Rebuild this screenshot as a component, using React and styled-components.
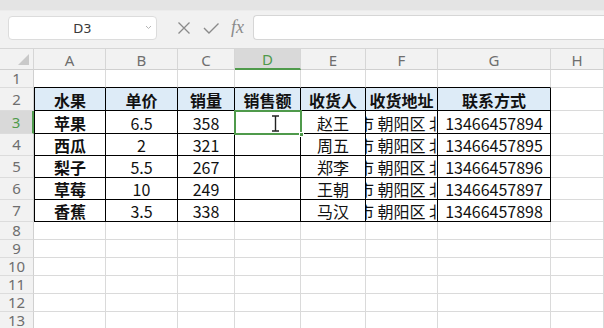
import React from "react";
import styled, { createGlobalStyle } from "styled-components";

const GlobalStyle = createGlobalStyle`
  html, body { margin: 0; padding: 0; background: #ffffff; }
  body { font-family: "Noto Sans", "Noto Sans CJK SC", sans-serif; }
  * { box-sizing: border-box; }
`;

const GREEN = "#4f9a4b";

const Page = styled.div`
  width: 604px;
  height: 328px;
  overflow: hidden;
  display: flex;
  flex-direction: column;
  background: #ffffff;
`;

const TopStrip = styled.div`
  height: 11px;
  flex: none;
  background: #e4e4e4;
  border-bottom: 1px solid #ececec;
`;

const FormulaBar = styled.div`
  height: 37px;
  flex: none;
  display: flex;
  align-items: flex-start;
  padding: 5px 0 0 8px;
  background: #f1f1f1;
`;

const NameBox = styled.div`
  width: 149px;
  height: 24px;
  background: #ffffff;
  border: 1px solid #dcdcdc;
  border-radius: 4px;
  display: flex;
  align-items: center;
  justify-content: center;
  position: relative;
  font-family: "DejaVu Sans", "Noto Sans", sans-serif;
  font-size: 13px;
  color: #3a3a3a;
`;

const Chevron = styled.span`
  position: absolute;
  right: 4px;
  top: 8px;
  display: flex;
`;

const IconGroup = styled.div`
  display: flex;
  align-items: center;
  height: 24px;
  gap: 12px;
  padding-left: 20px;
  width: 96px;
  flex: none;
`;

const Fx = styled.span`
  font-family: "Liberation Serif", serif;
  font-style: italic;
  font-size: 18px;
  color: #8a8a8a;
  line-height: 1;
  margin-top: -2px;
`;

const FormulaInput = styled.div`
  flex: 1;
  height: 25px;
  margin-top: -1px;
  background: #ffffff;
  border: 1px solid #d6d6d6;
  border-right: none;
  border-radius: 4px 0 0 4px;
`;

const Sheet = styled.div`
  display: grid;
  grid-template-columns: 34px 72px 72px 57px 66px 65px 72px 113px 1fr;
  grid-template-rows: ${(p) => p.$rows.map((r) => `${r}px`).join(" ")};
  flex: none;
`;

const Corner = styled.div`
  background: #f2f2f2;
  border-top: 1px solid #d6d6d6;
  border-right: 1px solid #d6d6d6;
  border-bottom: 1px solid #d0d0d0;
  display: flex;
  align-items: flex-end;
  justify-content: flex-end;
  padding: 0 4px 4px 0;
`;

const ColHeader = styled.div`
  background: ${(p) => (p.$selected ? "#d9d9d9" : "#f2f2f2")};
  border-top: 1px solid #d6d6d6;
  border-right: 1px solid #d6d6d6;
  border-bottom: ${(p) => (p.$selected ? `2px solid ${GREEN}` : "1px solid #d0d0d0")};
  display: flex;
  align-items: center;
  justify-content: center;
  font-size: 15px;
  color: ${(p) => (p.$selected ? GREEN : "#6e6e6e")};
  padding-top: 1px;
`;

const RowHeader = styled.div`
  background: ${(p) => (p.$selected ? "#d9d9d9" : "#f2f2f2")};
  border-right: ${(p) => (p.$selected ? `2px solid ${GREEN}` : "1px solid #d0d0d0")};
  border-bottom: 1px solid #dcdcdc;
  display: flex;
  align-items: center;
  justify-content: center;
  font-size: 15px;
  color: ${(p) => (p.$selected ? GREEN : "#6e6e6e")};
  line-height: 1;
`;

const Cell = styled.div`
  position: relative;
  background: ${(p) => (p.$fill ? "#ddebf7" : "#ffffff")};
  border-right: 1px solid ${(p) => (p.$table ? "#000000" : "#dadada")};
  border-bottom: 1px solid ${(p) => (p.$table || p.$tableTop ? "#000000" : "#dadada")};
  border-left: ${(p) => (p.$tableLeft ? "1px solid #000000" : "none")};
  display: flex;
  align-items: center;
  justify-content: center;
  overflow: hidden;
  white-space: nowrap;
  font-family: "Noto Sans CJK SC", "Noto Sans", sans-serif;
  font-size: 16px;
  font-weight: ${(p) => (p.$bold ? 700 : 400)};
  color: #111111;
  line-height: 1;
  padding-top: 1px;
`;

const SelectedCell = styled(Cell)`
  overflow: visible;
  z-index: 2;
`;

const SelectionFrame = styled.span`
  position: absolute;
  left: -1px;
  top: -1px;
  right: -2px;
  bottom: -2px;
  border: 2px solid ${GREEN};
  pointer-events: none;
`;

const FillHandle = styled.span`
  position: absolute;
  right: -4px;
  bottom: -4px;
  width: 5px;
  height: 5px;
  background: ${GREEN};
  border: 1px solid #ffffff;
`;

const Cursor = styled.svg`
  margin-left: 16px;
  margin-top: 2px;
`;

const cols = ["A", "B", "C", "D", "E", "F", "G", "H"];
const rowHeights = [22, 18, 23, 23, 22, 22, 22, 22, 18, 18, 18, 18, 18, 18];

const ADDR = "北京市 朝阳区 北京市";
const header = ["水果", "单价", "销量", "销售额", "收货人", "收货地址", "联系方式"];
const data = [
  ["苹果", "6.5", "358", "", "赵王", ADDR, "13466457894"],
  ["西瓜", "2", "321", "", "周五", ADDR, "13466457895"],
  ["梨子", "5.5", "267", "", "郑李", ADDR, "13466457896"],
  ["草莓", "10", "249", "", "王朝", ADDR, "13466457897"],
  ["香蕉", "3.5", "338", "", "马汉", ADDR, "13466457898"],
];

export default function App() {
  const cells = [];
  cells.push(
    <Corner key="corner">
      <svg width="11" height="11" viewBox="0 0 11 11">
        <polygon points="11,0 11,11 0,11" fill="#c9c9c9" />
      </svg>
    </Corner>
  );
  cols.forEach((c) =>
    cells.push(
      <ColHeader key={`h-${c}`} $selected={c === "D"}>
        {c}
      </ColHeader>
    )
  );

  for (let r = 1; r <= 13; r++) {
    cells.push(
      <RowHeader key={`r-${r}`} $selected={r === 3}>
        {r}
      </RowHeader>
    );
    for (let ci = 0; ci < 8; ci++) {
      const key = `c-${r}-${ci}`;
      const inTable = r >= 2 && r <= 7 && ci < 7;
      let text = "";
      if (r === 2 && ci < 7) text = header[ci];
      if (r >= 3 && r <= 7 && ci < 7) text = data[r - 3][ci];
      const props = {
        $table: inTable,
        $tableTop: r === 1 && ci < 7,
        $tableLeft: inTable && ci === 0,
        $fill: r === 2 && ci < 7,
        $bold: r === 2 || (inTable && ci === 0),
      };
      if (r === 3 && ci === 3) {
        cells.push(
          <SelectedCell key={key} {...props}>
            <Cursor width="9" height="17" viewBox="0 0 9 17">
              <path d="M1 1 H8 M4.5 1 V16 M1 16 H8" stroke="#222" strokeWidth="1.4" fill="none" />
            </Cursor>
            <SelectionFrame />
            <FillHandle />
          </SelectedCell>
        );
      } else {
        cells.push(
          <Cell key={key} {...props}>
            {text}
          </Cell>
        );
      }
    }
  }

  return (
    <>
      <GlobalStyle />
      <Page>
        <TopStrip />
        <FormulaBar>
          <NameBox>
            D3
            <Chevron>
              <svg width="7" height="5" viewBox="0 0 7 5">
                <path d="M1 1 L3.5 3.5 L6 1" stroke="#b5b5b5" strokeWidth="1" fill="none" />
              </svg>
            </Chevron>
          </NameBox>
          <IconGroup>
            <svg width="14" height="12" viewBox="0 0 14 12">
              <path d="M1.5 0.5 L12.5 11.5 M12.5 0.5 L1.5 11.5" stroke="#8a8a8a" strokeWidth="1.3" fill="none" />
            </svg>
            <svg width="16" height="11" viewBox="0 0 16 11">
              <path d="M1 5 L6 10 L15.5 0.5" stroke="#8a8a8a" strokeWidth="1.4" fill="none" />
            </svg>
            <Fx>fx</Fx>
          </IconGroup>
          <FormulaInput />
        </FormulaBar>
        <Sheet $rows={rowHeights}>{cells}</Sheet>
      </Page>
    </>
  );
}
